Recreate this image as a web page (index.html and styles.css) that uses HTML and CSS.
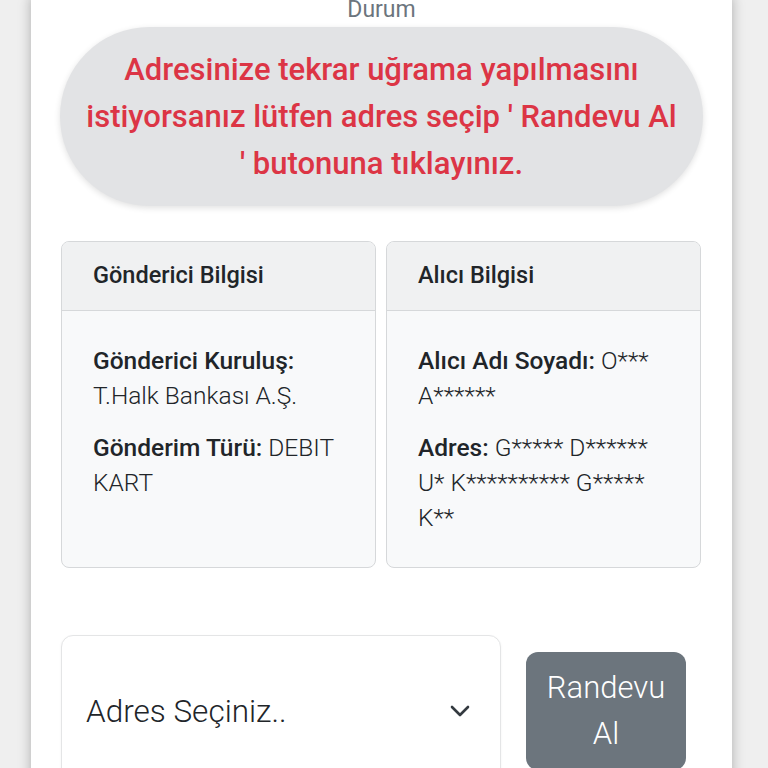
FILE: index.html
```html
<!DOCTYPE html>
<html lang="tr">
<head>
    <meta charset="UTF-8">
    <meta name="viewport" content="width=device-width, initial-scale=1.0">
    <title>Gönderi Durumu</title>
    <link rel="stylesheet" href="styles.css">
</head>
<body>
    <div class="container">
        <div class="status-title">Durum</div>

        <div class="status-pill">
            Adresinize tekrar uğrama yapılmasını istiyorsanız lütfen adres seçip ' Randevu Al '&nbsp;butonuna tıklayınız.
        </div>

        <div class="info-grid">
            <div class="info-card">
                <div class="info-header">Gönderici Bilgisi</div>
                <div class="info-body">
                    <p><b>Gönderici Kuruluş:</b> T.Halk Bankası A.Ş.</p>
                    <p><b>Gönderim Türü:</b> DEBIT KART</p>
                </div>
            </div>
            <div class="info-card">
                <div class="info-header">Alıcı Bilgisi</div>
                <div class="info-body">
                    <p><b>Alıcı Adı Soyadı:</b> O*** A******</p>
                    <p><b>Adres:</b> G***** D****** U* K********** G***** K**</p>
                </div>
            </div>
        </div>

        <div class="appointment-row">
            <div class="address-select">
                <span>Adres Seçiniz..</span>
                <svg width="20" height="12" viewBox="0 0 20 12">
                    <path d="M2 2 L10 10 L18 2" fill="none" stroke="#343a40" stroke-width="2.6" stroke-linecap="round" stroke-linejoin="round"/>
                </svg>
            </div>
            <button class="btn-appointment">Randevu Al</button>
        </div>
    </div>
</body>
</html>
```
FILE: styles.css
```css
* {
    margin: 0;
    padding: 0;
    box-sizing: border-box;
}

body {
    font-family: Roboto, 'Liberation Sans', Arial, sans-serif;
    background: #efefef;
    color: #212529;
    overflow: hidden;
}

.container {
    background: white;
    width: 701px;
    margin-left: 31px;
    margin-top: -4px;
    padding: 0 29px 40px;
    min-height: 820px;
    box-shadow: 0 0 12px rgba(0,0,0,0.28);
}

.status-title {
    text-align: center;
    color: #6c757d;
    font-size: 23px;
    line-height: 28px;
}

.status-pill {
    margin-top: 3px;
    background: #e2e3e5;
    border-radius: 90px;
    padding: 19px 20px;
    text-align: center;
    color: #dc3545;
    font-size: 31px;
    font-weight: 500;
    line-height: 47px;
    box-shadow: 0 2px 6px rgba(0,0,0,0.12);
}

.info-grid {
    display: grid;
    grid-template-columns: 1fr 1fr;
    gap: 10px;
    margin: 35px 2px 0 1px;
}

.info-card {
    border: 1px solid #d6d8da;
    border-radius: 8px;
    background: #f8f9fa;
    overflow: hidden;
}

.info-header {
    background: #f0f1f2;
    border-bottom: 1px solid #d6d8da;
    height: 69px;
    line-height: 67px;
    padding: 0 31px;
    font-size: 23.5px;
    font-weight: 500;
}

.info-body {
    padding: 32px 29px 32px 31px;
    font-size: 24.5px;
    font-weight: 300;
    line-height: 35px;
}

.info-body p + p {
    margin-top: 17px;
}

.info-body b {
    font-weight: 500;
}

.appointment-row {
    display: flex;
    align-items: center;
    margin-top: 67px;
    padding-left: 1px;
}

.address-select {
    width: 440px;
    height: 152px;
    background: white;
    border: 1px solid #e4e5e6;
    border-radius: 12px;
    display: flex;
    align-items: center;
    justify-content: space-between;
    padding: 0 30px 0 24px;
    font-size: 31.5px;
    font-weight: 300;
    box-shadow: 0 1px 3px rgba(0,0,0,0.05);
}

.btn-appointment {
    margin-left: 25px;
    width: 160px;
    padding: 13px 16px;
    border: none;
    border-radius: 12px;
    background: #6c757d;
    color: white;
    font-family: inherit;
    font-size: 31px;
    font-weight: 300;
    line-height: 46px;
}
```
